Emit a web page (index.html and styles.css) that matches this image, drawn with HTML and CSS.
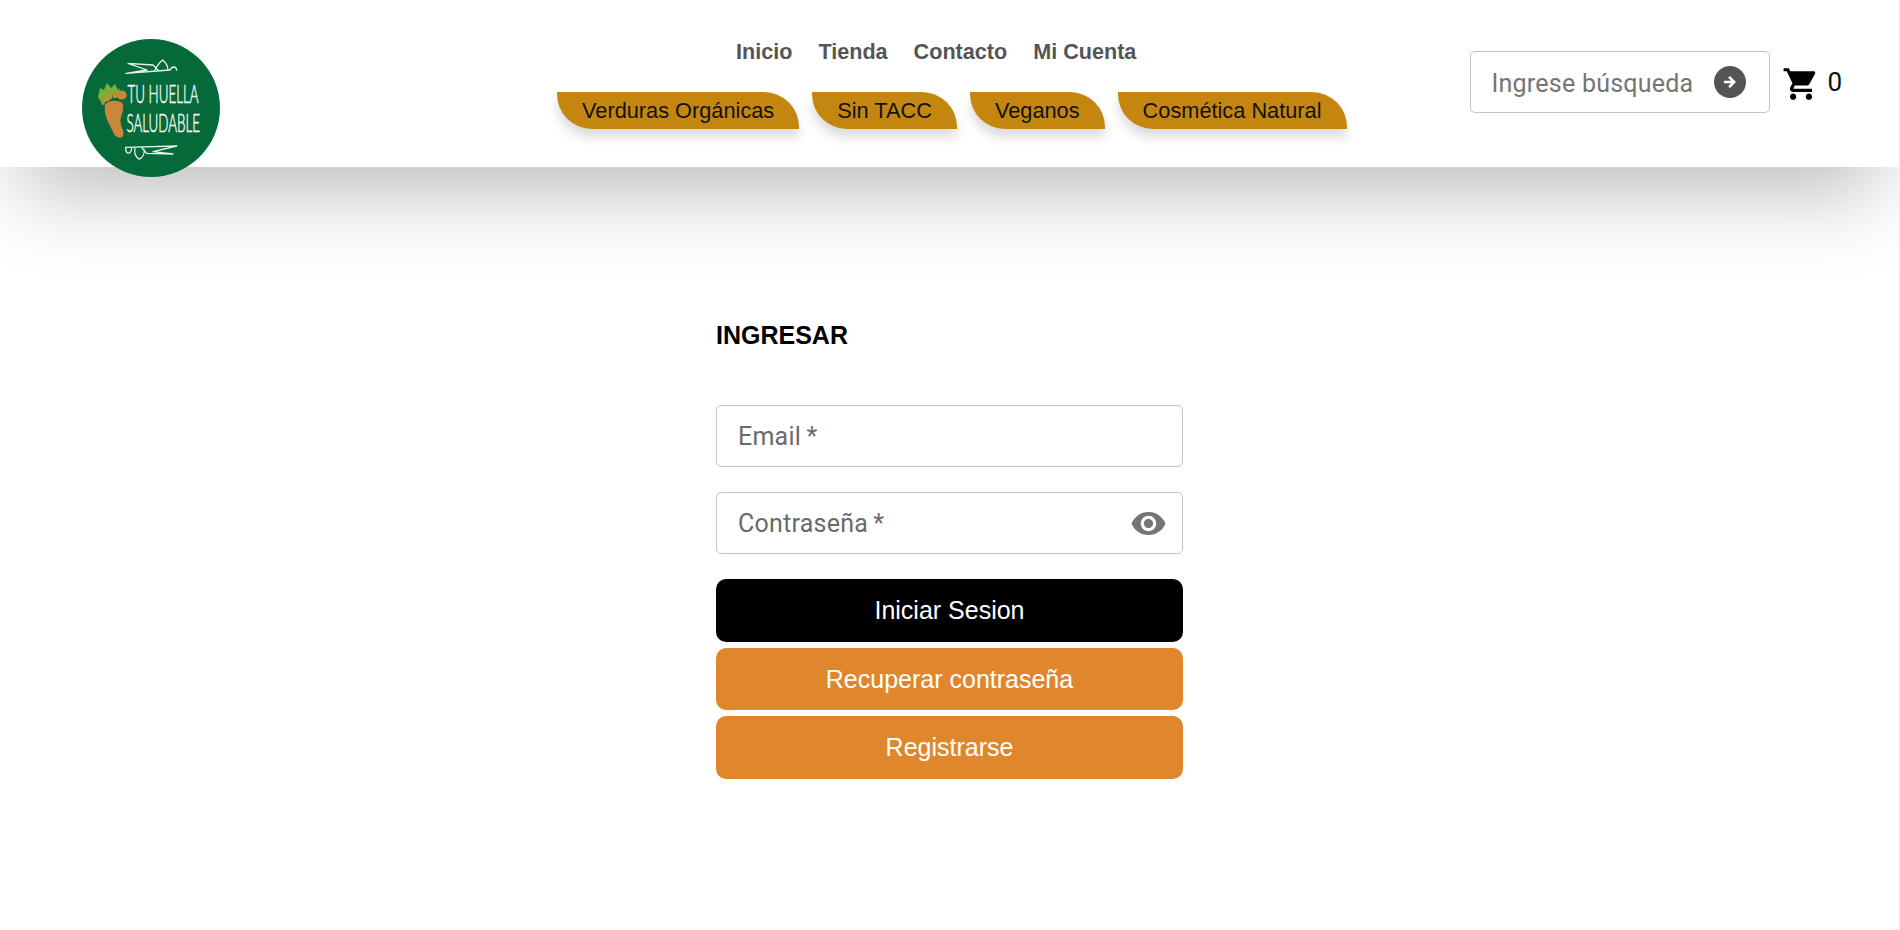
FILE: index.html
```html
<!DOCTYPE html>
<html lang="en">
  <head>
    <meta charset="UTF-8" />
    <meta name="viewport" content="width=device-width, initial-scale=1.0" />
    <title>Tu Huella Saludable</title>
    <link rel="stylesheet" href="styles.css">
  </head>
  <body>
    <header class="header">
      <a class="logo" href="#">
        <svg viewBox="0 0 138 138" width="138" height="138">
          <circle cx="69" cy="69" r="69" fill="#05693a" />
          <g fill="none" stroke="#e8f3ea" stroke-width="1.3" stroke-linecap="round" stroke-linejoin="round">
            <path d="M44 34.3 L88 31 C90 27 94 27 94.7 31 M46 24.3 L71 26 L76 31 M46 24.3 L65 31 L44 34.3 M73 31 C75 27 78 23 80.7 21 C84 24 86 27 86 31" />
            <path d="M49.7 109 C49 116 43 116 43.7 108.3 L94.7 107 L71 112.7 L91 115 L64.7 114.3 L60 109 M53 109.3 C52 114 54 118 57.3 120.3 C61 118 63 114 62 110.5" />
          </g>
          <g class="logo-text">
            <text transform="translate(45.5 64) scale(0.515 1)">TU HUELLA</text>
            <text transform="translate(44.5 93) scale(0.515 1)">SALUDABLE</text>
          </g>
          <path fill="#7eae38" d="M16 58 L18 49 L22 51 L25 44 L29 49 L33 45 L36 51 L38 49 L37 54 L30 56 L27 62 L20 64 Z" />
          <path fill="#c9873c" d="M23 66 C26 61 37 60 41 65 C42 72 39 76 38.5 81 C38 87 43 92 41 97 C39 100 34 99 32 95 C28 86 21 76 23 66 Z" />
          <g fill="#c9873c">
            <ellipse cx="39.7" cy="56" rx="5" ry="4.6" />
            <circle cx="33" cy="56.5" r="2.6" />
            <circle cx="28" cy="58" r="2.4" />
            <circle cx="23.8" cy="60.5" r="2.1" />
            <circle cx="21" cy="64" r="1.9" />
          </g>
        </svg>
      </a>
      <div class="menu">
        <nav class="main-nav">
          <a href="#">Inicio</a>
          <a href="#">Tienda</a>
          <a href="#">Contacto</a>
          <a href="#">Mi Cuenta</a>
        </nav>
        <nav class="tabs">
          <a class="tab" href="#">Verduras Orgánicas</a>
          <a class="tab" href="#">Sin TACC</a>
          <a class="tab" href="#">Veganos</a>
          <a class="tab" href="#">Cosmética Natural</a>
        </nav>
      </div>
      <div class="search">
        <span class="search-text">Ingrese búsqueda</span>
        <svg class="search-go" viewBox="0 0 32 32" width="32" height="32">
          <circle cx="16" cy="16" r="16" fill="#555" />
          <path fill="#fff" d="M16 10l-1.8 1.8 2.9 2.9H10v2.6h7.1l-2.9 2.9L16 22l6-6z" />
        </svg>
      </div>
      <a class="cart" href="#">
        <svg viewBox="0 0 24 24" width="38" height="38">
          <path fill="#000" d="M7 18c-1.1 0-1.99.9-1.99 2S5.9 22 7 22s2-.9 2-2-.9-2-2-2zM1 2v2h2l3.6 7.59-1.35 2.45c-.16.28-.25.61-.25.96 0 1.1.9 2 2 2h12v-2H7.42c-.14 0-.25-.11-.25-.25l.03-.12.9-1.63h7.45c.75 0 1.41-.41 1.75-1.03l3.58-6.49c.08-.14.12-.31.12-.48 0-.55-.45-1-1-1H5.21l-.94-2H1zm16 16c-1.1 0-1.99.9-1.99 2s.89 2 1.99 2 2-.9 2-2-.9-2-2-2z" />
        </svg>
        <span class="cart-count">0</span>
      </a>
    </header>

    <main class="login">
      <h1 class="login-title">INGRESAR</h1>
      <form class="login-form">
        <div class="field"><span>Email&thinsp;*</span></div>
        <div class="field">
          <span>Contraseña&thinsp;*</span>
          <svg viewBox="0 0 24 24" width="37" height="37">
            <path fill="#757575" d="M12 4.5C7 4.5 2.73 7.61 1 12c1.73 4.39 6 7.5 11 7.5s9.27-3.11 11-7.5c-1.73-4.39-6-7.5-11-7.5zM12 17c-2.76 0-5-2.24-5-5s2.24-5 5-5 5 2.24 5 5-2.24 5-5 5zm0-8c-1.66 0-3 1.34-3 3s1.34 3 3 3 3-1.34 3-3-1.34-3-3-3z" />
          </svg>
        </div>
        <div class="buttons">
          <button class="btn btn-black" type="button">Iniciar Sesion</button>
          <button class="btn btn-orange" type="button">Recuperar contraseña</button>
          <button class="btn btn-orange" type="button">Registrarse</button>
        </div>
      </form>
    </main>
  </body>
</html>
```

FILE: styles.css
```css
* {
  box-sizing: border-box;
}

body {
  margin: 0;
  height: 930px;
  overflow: hidden;
  background-color: #fff;
  border-right: 1px solid #eee;
  font-family: "Liberation Sans", Arial, sans-serif;
}

a {
  text-decoration: none;
}

.header {
  display: flex;
  align-items: flex-start;
  height: 167px;
  padding-left: 82px;
  background-color: #fff;
  box-shadow: 0 45px 85px -22px rgba(0, 0, 0, 0.28);
}

.logo {
  display: block;
  height: 138px;
  margin-top: 39px;
}

.logo svg {
  display: block;
}

.logo-text {
  fill: #f1f7f0;
  stroke: #f1f7f0;
  stroke-width: 0.6;
  font-family: Lato, sans-serif;
  font-weight: 300;
  font-size: 26px;
}

.menu {
  margin-left: 337px;
  padding-top: 39px;
}

.main-nav {
  display: flex;
  gap: 26px;
  padding-left: 179px;
}

.main-nav a {
  font-size: 21.6px;
  line-height: 25px;
  font-weight: bold;
  color: #555;
}

.tabs {
  display: flex;
  gap: 13px;
  margin-top: 28px;
}

.tab {
  height: 37px;
  padding: 0 25px;
  border-radius: 0 35px 0 35px;
  background-color: #c5860f;
  box-shadow: 0 8px 12px rgba(0, 0, 0, 0.15);
  font-size: 21.75px;
  line-height: 37px;
  color: #111;
}

.search {
  display: flex;
  align-items: center;
  justify-content: space-between;
  width: 300px;
  height: 62px;
  margin-top: 51px;
  margin-left: 123px;
  padding: 0 23px 0 21px;
  border: 1px solid #c4c4c4;
  border-radius: 5px;
  font-family: Roboto, sans-serif;
  font-size: 25px;
  letter-spacing: 0.00938em;
  color: #757575;
}

.search-text {
  padding-top: 2px;
}

.cart {
  display: flex;
  align-items: center;
  gap: 8px;
  margin-top: 65px;
  margin-left: 12px;
  color: #111;
}

.cart svg {
  display: block;
}

.cart-count {
  font-family: Roboto, sans-serif;
  font-size: 26px;
  margin-top: -5px;
}

.login {
  width: 467px;
  margin: 0 0 0 716px;
  padding-top: 154px;
}

.login-title {
  margin: 0 0 55px;
  font-size: 25px;
  line-height: 29px;
  font-weight: bold;
  color: #000;
}

.field {
  display: flex;
  align-items: center;
  justify-content: space-between;
  height: 62px;
  margin-bottom: 25px;
  padding: 0 15px 0 21px;
  border: 1px solid #c4c4c4;
  border-radius: 5px;
  font-family: Roboto, sans-serif;
  font-size: 25px;
  letter-spacing: 0.00938em;
  color: #6a6a6a;
}

.buttons {
  display: flex;
  flex-direction: column;
  gap: 6px;
}

.btn {
  height: 62.7px;
  border: none;
  border-radius: 10px;
  font-family: "Liberation Sans", Arial, sans-serif;
  font-size: 25px;
  color: #fff;
}

.btn-black {
  background-color: #000;
}

.btn-orange {
  background-color: #e0872e;
}
```
